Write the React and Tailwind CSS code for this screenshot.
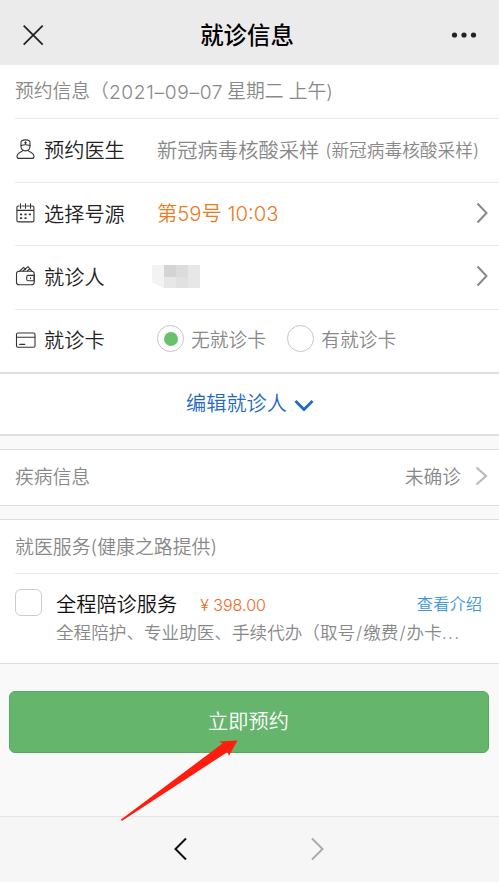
const rowBase = 'ml-[15px] flex items-center border-b border-[#ebebeb]';

function Chevron({ className }) {
  return (
    <svg className={className} width="12" height="22" viewBox="0 0 12 22" fill="none" stroke="currentColor" strokeWidth="2">
      <path d="M1.5 1.5 10.5 11 1.5 20.5" />
    </svg>
  );
}

function Icon({ children }) {
  return (
    <svg className="mr-2 shrink-0 text-[#333]" width="21" height="22" viewBox="0 0 21 22" fill="none" stroke="currentColor" strokeWidth="1.1" strokeLinecap="round" strokeLinejoin="round">
      {children}
    </svg>
  );
}

function DoctorIcon() {
  return (
    <Icon>
      <path d="M6 7V4.200C5.500 1.900 7.200.9 10.500.9s5 1 4.500 3.300V7c0 3-1.800 4.900-4.500 4.900S6 10 6 7Z" />
      <path d="M6 6.500c2.700-.9 6.300-.9 9 0M10.500 2.800v1.800M9.600 3.700h1.800" />
      <path d="M8 11.200c0 1.500-6 2.300-6 6.200 0 1.400.8 2 2.200 2h12.600c1.400 0 2.200-.6 2.200-2 0-3.900-6-4.700-6-6.200" />
    </Icon>
  );
}

function CalendarIcon() {
  return (
    <Icon>
      <path d="M4 3h-.6C2.400 3 1.900 3.600 1.900 4.500v12.900c0 1 .6 1.500 1.500 1.500h14c1 0 1.500-.6 1.500-1.500V4.500c0-1-.6-1.500-1.500-1.500h-.8M7 3h2.200M11.800 3h2.400M2 7.400h17M5.500.8v4.400M10.500.8v4.400M15.500.8v4.400" />
      <path d="M10.200 11.400h.6M14.600 11.400h.6M5.800 11.400h.6M5.800 15.200h.6M10.200 15.200h.6" strokeWidth="1.8" />
    </Icon>
  );
}

function WalletIcon() {
  return (
    <Icon>
      <rect x="1.500" y="5.200" width="17.700" height="13.600" rx="2.600" />
      <path d="M4.800 5 8.600 1.400l2 2M8 5l5-4.300 2 2.300M12.500 4.800l2.500-2 1.800 2.200" />
      <path d="M19.200 9.400h-5.600c-1.500 0-1.900.6-1.900 1.600v2.200c0 1 .4 1.600 1.900 1.600h5.600zM15.500 11.800v.8" />
    </Icon>
  );
}

function CardIcon() {
  return (
    <Icon>
      <rect x="1.500" y="3" width="18.500" height="14.200" rx="1.400" />
      <path d="M1.700 7.200h18M4.700 14.400h5" />
    </Icon>
  );
}

function Row({ icon, label, arrow, last, children }) {
  return (
    <div className={last ? 'ml-[15px] flex h-[62px] items-center' : rowBase + ' h-[63.5px]'}>
      {icon}
      <span className="mt-[2px] w-[113px] shrink-0 text-[20.2px] text-[#222]">{label}</span>
      {children}
      {arrow && <Chevron className="-mt-[2px] mr-[11px] ml-auto text-[#888]" />}
    </div>
  );
}

function Radio({ checked, label }) {
  return (
    <label className="flex items-center text-[18.8px] text-[#888]">
      <span className="mr-[7px] flex size-[27px] items-center justify-center rounded-full border border-[#c8c5c8]">
        {checked && <span className="size-[14px] rounded-full bg-[#67c26b]" />}
      </span>
      <span className="mt-[5px]">{label}</span>
    </label>
  );
}

export default function App() {
  return (
    <div className="relative flex h-[882px] w-[499px] flex-col overflow-hidden bg-[#f9f9f9] font-[Inter,'Noto_Sans_CJK_SC',sans-serif] font-[350] whitespace-nowrap">
      <header className="flex h-[65px] shrink-0 items-center justify-between bg-[#ebebeb] pt-[5px] pr-[22px] pl-[22px]">
        <svg width="22" height="22" viewBox="0 0 22 22" fill="none" stroke="#222" strokeWidth="1.8">
          <path d="m1.700 1.700 19 19M20.700 1.700l-19 19" />
        </svg>
        <h1 className="mt-[2px] -ml-[1px] text-[23.4px] font-medium text-black">就诊信息</h1>
        <svg width="26" height="6" viewBox="0 0 26 6" fill="#222">
          <circle cx="3.5" cy="3" r="2.6" />
          <circle cx="13" cy="3" r="2.6" />
          <circle cx="22.5" cy="3" r="2.6" />
        </svg>
      </header>

      <section className="shrink-0 border-b-2 border-[#e0e0e0] bg-white">
        <div className={rowBase + ' h-[54px] pt-[2px] text-[18.8px] text-[#888]'}>
          <span>预约信息（</span>
          <span className="text-[19.2px] tracking-[0.65px]">2021–09–07</span>
          <span className="ml-[4px]">星期二&nbsp;上午)</span>
        </div>
        <Row icon={<DoctorIcon />} label="预约医生">
          <span className="mt-[1px] text-[20.3px] text-[#888]">新冠病毒核酸采样</span>
          <span className="mt-[2px] ml-[6px] text-[17.7px] text-[#888]">(新冠病毒核酸采样)</span>
        </Row>
        <Row icon={<CalendarIcon />} label="选择号源" arrow>
          <span className="text-[20.3px] text-[#e87d1e]">第59号 10:03</span>
        </Row>
        <Row icon={<WalletIcon />} label="就诊人" arrow>
          <svg className="-mt-[2px] -ml-[5px]" width="48" height="23" viewBox="0 0 48 23">
            <path d="M0 0h48v23H12L0 17z" fill="#e7e7e7" />
            <path d="M0 0h12v23L0 17z" fill="#f3f3f3" />
            <path d="M12 0h12v12H12z" fill="#d4d4d4" />
            <path d="M24 0h12v12H24z" fill="#dcdcdc" />
            <path d="M24 12h12v11H24z" fill="#e1e1e1" />
          </svg>
        </Row>
        <Row icon={<CardIcon />} label="就诊卡" last>
          <div className="-mt-[4px] flex gap-[21px]">
            <Radio checked label="无就诊卡" />
            <Radio label="有就诊卡" />
          </div>
        </Row>
        <div className="flex h-[62px] items-center justify-center border-t-2 border-[#e0e0e0] pl-[1px] text-[20.2px] text-[#1f69c4]">
          <span className="mt-[2px]">编辑就诊人</span>
          <svg className="mt-1 ml-[7px]" width="20" height="14" viewBox="0 0 20 14" fill="none" stroke="currentColor" strokeWidth="2.8">
            <path d="m1.500 2 8.500 8.500L18.500 2" />
          </svg>
        </div>
      </section>

      <section className="mt-[13px] flex h-[57px] shrink-0 items-center border-y border-[#dedede] bg-white pr-[11px] pb-[2px] pl-[15px] text-[18.8px] text-[#888]">
        <span className="mt-[4px]">疾病信息</span>
        <span className="mt-[4px] ml-auto">未确诊</span>
        <svg className="ml-[14px] text-[#bbb]" width="13" height="20" viewBox="0 0 13 20" fill="none" stroke="currentColor" strokeWidth="2.2">
          <path d="M1.500 1.500 11 10 1.500 18.500" />
        </svg>
      </section>

      <section className="mt-[13px] h-[145px] shrink-0 border-y border-[#dedede] bg-white">
        <div className={rowBase + ' h-[54px] pt-[4px] text-[18.9px] text-[#888]'}>就医服务(健康之路提供)</div>
        <div className="flex pt-[15px] pr-[17px] pl-[15px]">
          <span className="size-[27px] shrink-0 rounded-md border border-[#ccc]" />
          <div className="ml-[14px] grow pt-[1px]">
            <div className="flex h-[30px] items-center">
              <span className="mt-[2px] text-[20.2px] text-[#111]">全程陪诊服务</span>
              <span className="ml-[23px] text-[16px] text-[#ef6a1f]">¥ 398.00</span>
              <span className="ml-auto text-[16.3px] text-[#3d97dc]">查看介绍</span>
            </div>
            <p className="text-[17.6px] leading-[26px] text-[#888]">
              全程陪护、专业助医、手续代办（取号<span className="mx-[1px]">/</span>缴费<span className="mx-[1px]">/</span>办卡<span className="tracking-[1.2px]">...</span>
            </p>
          </div>
        </div>
      </section>

      <button className="mx-auto mt-[27px] h-[62px] w-[480px] shrink-0 -translate-x-px rounded-md border border-[#57a95f] bg-[#66b56d] pt-[2px] text-[20.2px] text-white">
        立即预约
      </button>

      <nav className="mt-auto flex h-[66px] shrink-0 items-center justify-center gap-[124px] border-t border-[#e5e5e5] bg-[#f6f6f6] pr-[2px] pb-[2px]">
        <svg width="13" height="24" viewBox="0 0 13 24" fill="none" stroke="#111" strokeWidth="2">
          <path d="M12 1.500 1.500 12 12 22.500" />
        </svg>
        <svg width="13" height="24" viewBox="0 0 13 24" fill="none" stroke="#aaa" strokeWidth="2">
          <path d="M1 1.500 11.500 12 1 22.500" />
        </svg>
      </nav>

      <svg className="absolute top-[740px] left-[120px]" width="119" height="82" viewBox="0 0 119 82">
        <path d="M1 79.500 102.500 3.500 99 1.500 117.500.5 109 15.800 107.500 12 1.800 81z" fill="#ff1d10" />
      </svg>
    </div>
  );
}
